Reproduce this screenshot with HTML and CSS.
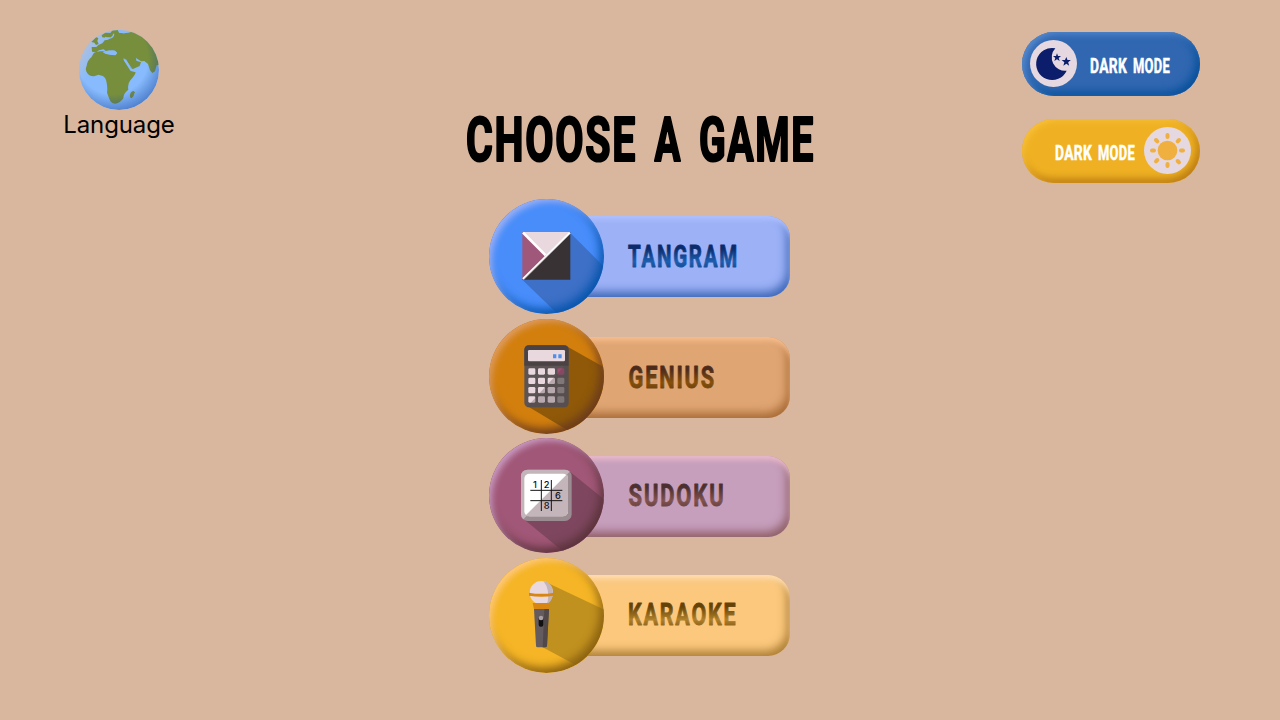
FILE: index.html
```html
<!DOCTYPE html>
<html lang="en">
<head>
<meta charset="utf-8">
<title>Choose a game</title>
<link rel="stylesheet" href="styles.css">
</head>
<body>
<div class="page">
  <aside class="language">
    <svg class="globe" viewBox="87 30 240 240">
      <defs>
        <radialGradient id="shade" cx=".42" cy=".36" r=".68"><stop offset=".65" stop-color="#1847a0" stop-opacity="0"/><stop offset="1" stop-color="#1847a0" stop-opacity=".55"/></radialGradient>
        <linearGradient id="glow" x1="0" y1=".3" x2=".2" y2=".42"><stop stop-color="#d8c4b8" stop-opacity=".5"/><stop offset="1" stop-color="#d8c4b8" stop-opacity="0"/></linearGradient>
        <clipPath id="world"><circle cx="207" cy="150" r="120"/></clipPath>
      </defs>
      <g clip-path="url(#world)">
        <path fill="#88bbfd" d="M87 30h240v240H87z"/>
        <path fill="url(#glow)" d="M87 30h240v240H87z"/>
        <path fill="#778f3c" d="M124 66L138 52L145 54L142 63L146 72L138 75L133 68ZM155 46L166 38L181 39L190 28L204 30L207 38L222 40L241 37L260 25L340 60V130L320 136L315 154L307 159L300 151L294 132L283 123L273 124L258 114L259 122L273 127L269 138L249 147L244 146L229 119L220 116L222 122L242 153L257 157Q254 168 240 182Q232 192 235 209Q220 220 220 235Q210 250 197 251Q184 251 179 239L171 218Q173 204 170 189Q168 173 158 168L146 164L132 169Q119 170 112 160Q104 151 110 137Q112 122 124 112L132 98L149 94L164 94L166 101L178 104L196 106L201 99L195 94L179 94L170 96L161 88L147 91L139 97L126 95L125 81L139 81L145 75L157 70L164 61L175 59L180 51L168 53L157 52Z"/>
        <path d="M160 96Q177 91 193 92Q204 97 198 103Q186 105 175 100L163 99ZM222 115Q234 129 246 147" fill="#88bbfd" stroke="#88bbfd" stroke-width="2"/>
        <path d="M191 41Q191 52 177 55L165 52" fill="none" stroke="#88bbfd" stroke-width="4"/>
        <path fill="#88bbfd" d="M204 30L223 34L241 36L222 40L208 38Z"/>
        <path fill="#778f3c" d="M242 218Q250 209 254 217Q252 230 245 235Q236 232 242 218Z"/>
        <circle cx="207" cy="150" r="120" fill="url(#shade)"/>
      </g>
    </svg>
    <span class="language-name">Language</span>
  </aside>

  <main class="menu">
    <svg class="title" viewBox="460 105 360 64" role="heading">
      <text class="face" x="466" y="161" textLength="171" lengthAdjust="spacingAndGlyphs">CHOOSE</text>
      <text class="face" x="654.500" y="161" textLength="27.500" lengthAdjust="spacingAndGlyphs">A</text>
      <text class="face" x="699" y="161" textLength="116" lengthAdjust="spacingAndGlyphs">GAME</text>
    </svg>
    <div class="games">
      <div class="game tangram">
        <div class="disc">
          <svg viewBox="27 27 345 345">
            <path fill="#3d70c6" d="M270 128L390 248V400H262L127 269Z"/>
            <path fill="#e9d9de" d="M127 126H271L199 195Z"/>
            <path fill="#9f5879" d="M127 126L199 197L127 269Z"/>
            <path fill="#383234" d="M271 126V269H127Z"/>
            <path d="M129 128L197 196" stroke="#fff" stroke-width="8"/>
            <path d="M129 267L270 128" stroke="#fff" stroke-width="6"/>
            <path d="M131 269L271 131" stroke="#a49a99" stroke-width="2"/>
          </svg>
        </div>
        <div class="bar"><svg class="label" viewBox="0 0 120 40"><text class="face" x="0" y="30.500" textLength="111" lengthAdjust="spacingAndGlyphs" fill="url(#ink1)" stroke="url(#ink1)">TANGRAM</text>
          <defs><linearGradient id="ink1" x2="0" y2="1"><stop offset=".3" stop-color="#0b2c6c"/><stop offset=".65" stop-color="#1c5eb0"/><stop offset=".85" stop-color="#154a91"/></linearGradient></defs></svg></div>
      </div>
      <div class="game genius">
        <div class="disc">
          <svg viewBox="27 20 345 345">
            <path fill="#8f5909" d="M260 102L390 175V400H340L143 282Z"/>
            <rect x="133" y="99" width="133" height="186" rx="14" fill="#5c5355"/>
            <path fill="#4a4243" d="M133 160V113Q133 99 147 99H252Q266 99 266 113V160Z"/>
            <rect x="144" y="113" width="111" height="34" rx="4" fill="#e9d9de"/>
            <path fill="#4d8ef0" d="M219 126h10v12h-10zM235 126h10v12h-10z"/>
            <g fill="#e9d9de">
              <rect x="145" y="168" width="21" height="19" rx="4"/><rect x="174" y="168" width="21" height="19" rx="4"/><rect x="203" y="168" width="22" height="19" rx="4"/>
              <rect x="145" y="196" width="21" height="19" rx="4"/><rect x="174" y="196" width="21" height="19" rx="4"/><rect x="203" y="196" width="22" height="19" rx="4"/>
              <rect x="145" y="224" width="21" height="19" rx="4"/><rect x="174" y="224" width="21" height="19" rx="4"/><rect x="203" y="224" width="22" height="19" rx="4"/>
              <rect x="145" y="252" width="21" height="19" rx="4"/><rect x="174" y="252" width="21" height="19" rx="4"/><rect x="203" y="252" width="22" height="19" rx="4"/>
            </g>
            <rect x="232" y="168" width="21" height="19" rx="4" fill="#9f4d70"/>
            <g fill="#98908f"><rect x="232" y="196" width="21" height="19" rx="4"/><rect x="232" y="224" width="21" height="19" rx="4"/><rect x="232" y="252" width="21" height="19" rx="4"/></g>
            <path fill="#4d4446" opacity=".32" d="M254 160H266V271Q266 285 252 285H140Z"/>
          </svg>
        </div>
        <div class="bar"><svg class="label" viewBox="0 0 120 40"><text class="face" x="0.500" y="30.500" textLength="87.500" lengthAdjust="spacingAndGlyphs" fill="url(#ink2)" stroke="url(#ink2)">GENIUS</text>
          <defs><linearGradient id="ink2" x2="0" y2="1"><stop offset=".3" stop-color="#4c2b1b"/><stop offset=".65" stop-color="#855009"/><stop offset=".85" stop-color="#6d400f"/></linearGradient></defs></svg></div>
      </div>
      <div class="game sudoku">
        <div class="disc">
          <svg viewBox="27 18 345 345">
            <path fill="#7e475f" d="M268 118L390 216V400H300L130 260Z"/>
            <rect x="123" y="113" width="152" height="154" rx="20" fill="#9b8c91"/>
            <path fill="#c4b5ba" d="M143 113H255Q264 113 269 119L130 262Q123 257 123 247V133Q123 113 143 113Z"/>
            <rect x="133" y="125" width="131" height="128" rx="15" fill="#fff"/>
            <path fill="#c4b5ba" d="M261 127Q264 132 264 140V238Q264 253 249 253H148Q140 253 136 251Z"/>
            <path d="M151 175H247M151 206H247M184 144V237M214 144V237" stroke="#151314" stroke-width="3"/>
            <g class="digits"><text x="159" y="169">1</text><text x="191" y="169">2</text><text x="225" y="200">6</text><text x="191" y="231">8</text></g>
          </svg>
        </div>
        <div class="bar"><svg class="label" viewBox="0 0 120 40"><text class="face" x="0.500" y="30.500" textLength="97" lengthAdjust="spacingAndGlyphs" fill="url(#ink3)" stroke="url(#ink3)">SUDOKU</text>
          <defs><linearGradient id="ink3" x2="0" y2="1"><stop offset=".3" stop-color="#4c302f"/><stop offset=".65" stop-color="#80524e"/><stop offset=".85" stop-color="#66413e"/></linearGradient></defs></svg></div>
      </div>
      <div class="game karaoke">
        <div class="disc">
          <svg viewBox="27 18 345 345">
            <path fill="#c1911f" d="M205 94L390 181V400L283 337L188 286Z"/>
            <circle cx="184" cy="122" r="35" fill="#e9d9de"/>
            <path fill="#c4b5ba" d="M190 87Q219 92 219 123Q217 147 202 156Q211 112 190 87Z"/>
            <path fill="#d98512" d="M147 122Q184 129 222 122V131Q184 137 147 131Z"/>
            <path fill="#d98512" d="M158 153H210L206 172H162Z"/>
            <path fill="#635b5d" d="M162 171H207L201 282Q200 286 195 286H173Q168 286 168 281Z"/>
            <path fill="#514849" d="M193 171H207L201 282Q200 286 195 286H188Z"/>
            <rect x="176" y="193" width="14" height="31" rx="6" fill="#111"/>
            <circle cx="183" cy="198" r="7" fill="#a9a0a2"/>
          </svg>
        </div>
        <div class="bar"><svg class="label" viewBox="0 0 120 40"><text class="face" x="0" y="30.500" textLength="109.500" lengthAdjust="spacingAndGlyphs" fill="url(#ink4)" stroke="url(#ink4)">KARAOKE</text>
          <defs><linearGradient id="ink4" x2="0" y2="1"><stop offset=".3" stop-color="#654206"/><stop offset=".65" stop-color="#b0802a"/><stop offset=".85" stop-color="#8b611b"/></linearGradient></defs></svg></div>
      </div>
    </div>
  </main>

  <aside class="modes">
    <div class="mode night">
      <svg class="knob" viewBox="60 60 141 141">
        <circle cx="130.500" cy="130.500" r="70.500" fill="#e5d8e0"/>
        <path fill="#0c1e6b" d="M136 85A48 48 0 1 0 170 152A40 40 0 0 1 136 85Z"/>
        <path fill="#0c1e6b" d="M141 100l3 8h9l-7 6 3 9-8-5-8 5 3-9-7-6h9zM169 111l3.500 9h10l-8 7 3 10-8.500-6-9 6 3-10-8-7h10z"/>
      </svg>
      <svg class="mode-text" viewBox="0 0 80 24"><text class="face" x="0" y="19" textLength="37" lengthAdjust="spacingAndGlyphs">DARK</text><text class="face" x="43" y="19" textLength="37" lengthAdjust="spacingAndGlyphs">MODE</text></svg>
    </div>
    <div class="mode day">
      <svg class="mode-text" viewBox="0 0 80 24"><text class="face" x="0" y="19" textLength="37" lengthAdjust="spacingAndGlyphs">DARK</text><text class="face" x="43" y="19" textLength="37" lengthAdjust="spacingAndGlyphs">MODE</text></svg>
      <svg class="knob" viewBox="402 321 141 141">
        <circle cx="472.500" cy="391.500" r="70.500" fill="#e5d8e0"/>
        <circle cx="472.500" cy="391.500" r="29.500" fill="#f0b03f"/>
        <path d="M472.500 345v6M472.500 432v6M426 391.500h6M513 391.500h6M438 360l4 4M503 423l4 4M507 360l-4 4M442 420l-4 4" stroke="#f0b03f" stroke-width="12" stroke-linecap="round"/>
      </svg>
    </div>
  </aside>
</div>
</body>
</html>
```
FILE: styles.css
```css
* { box-sizing: border-box; }
body { margin: 0; background: #d9b69e; font-family: Inter, sans-serif; }
svg { display: block; overflow: visible; }
.page { display: grid; grid-template-columns: 238px 1fr 258px; width: 1280px; height: 720px; overflow: hidden; }

.face { font-family: Roboto, sans-serif; font-weight: 700; stroke-linejoin: round; }

.language { display: flex; flex-direction: column; align-items: center; padding-top: 30px; }
.globe { width: 80px; height: 80px; }
.language-name { font-size: 24px; line-height: 30px; color: #000; letter-spacing: -.1px; }

.menu { display: flex; flex-direction: column; align-items: center; padding: 105px 0 0 19px; }
.title { width: 360px; height: 64px; margin-bottom: 30px; }
.title .face { font-size: 61px; letter-spacing: 2.500px; fill: #000; stroke: #000; stroke-width: 2.200px; }
.games { display: flex; flex-direction: column; gap: 4.700px; width: 301px; margin-left: -1px; }
.game { display: flex; align-items: center; height: 115px; }
.disc { position: relative; z-index: 1; flex: none; width: 115px; height: 115px; border-radius: 50%; overflow: hidden; background: var(--disc); }
.disc svg { width: 115px; height: 115px; }
.disc::after { content: ""; position: absolute; inset: 0; border-radius: 50%; box-shadow: inset 4px 4px 6px -1px var(--disc-light), inset -4px -5px 10px var(--disc-dark); }
.bar { flex: 1; height: 81px; margin-left: -57px; padding: 20px 0 0 81px; border-radius: 0 22px 22px 0; background: var(--bar); box-shadow: inset 0 5px 5px -1px var(--bar-light), inset -3px -5px 10px var(--bar-dark); }
.label { width: 120px; height: 40px; }
.label .face { font-size: 31.500px; letter-spacing: 2.700px; stroke-width: .9px; }
.digits { font: 500 28px Inter, sans-serif; fill: #151314; }

.tangram { --disc: #488dfa; --disc-dark: #0755ad; --disc-light: #9db0f5; --bar: #9cb1f6; --bar-dark: #3d67b7; --bar-light: #b0c0ff; }
.genius { --disc: #d27f0e; --disc-dark: #6b3b1c; --disc-light: #df9c60; --bar: #dfa573; --bar-dark: #a86b36; --bar-light: #f7bd8d; }
.genius .bar { margin-top: 3px; }
.sudoku { --disc: #a15777; --disc-dark: #5c333b; --disc-light: #c89ac0; --bar: #c69fbd; --bar-dark: #8f5f66; --bar-light: #e9b9c9; }
.karaoke { --disc: #f5b526; --disc-dark: #8a6010; --disc-light: #ffc97c; --bar: #fbc87e; --bar-dark: #ac7e35; --bar-light: #ffddb0; }
.sudoku .bar { margin-top: 1px; }
.sudoku .label, .karaoke .label { margin-top: -1px; }

.modes { display: flex; flex-direction: column; gap: 23px; padding-top: 32px; }
.mode { display: flex; align-items: center; width: 178px; height: 64px; padding: 0 8px 1px; border-radius: 32px; }
.night { gap: 13px; background: #3067b0; box-shadow: inset 4px 3px 7px -1px #588bd0, inset -4px -4px 8px #07509b; }
.day { justify-content: flex-end; gap: 9px; padding-right: 9px; background: #efb123; box-shadow: inset 3px 3px 6px -1px #fac23a, inset -3px -4px 8px #b97a14; }
.knob { width: 47px; height: 47px; }
.mode-text { width: 80px; height: 24px; margin-top: 4px; }
.mode-text .face { font-size: 19.500px; letter-spacing: .4px; fill: #fff; stroke: #fff; stroke-width: .5px; }
```
